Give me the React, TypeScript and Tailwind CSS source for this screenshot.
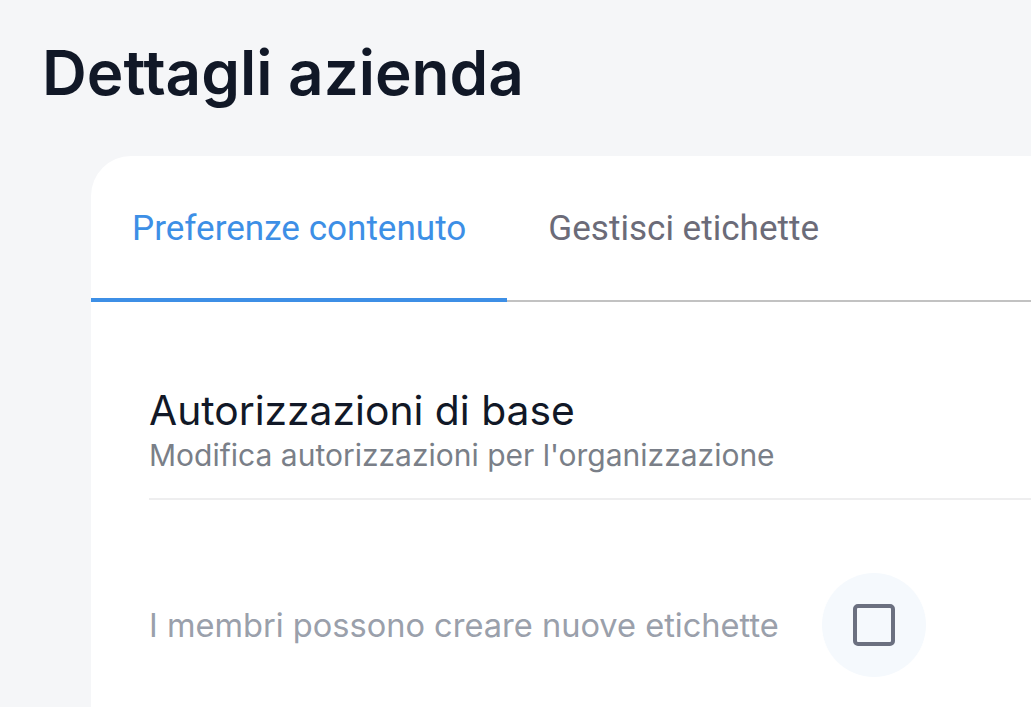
import { useState } from 'react';

const tabs = ['Preferenze contenuto', 'Gestisci etichette'];

export default function App() {
  const [active, setActive] = useState(0);
  const [checked, setChecked] = useState(false);

  return (
    <div className="min-h-screen bg-[#f5f6f8] overflow-hidden" style={{ fontFamily: 'Inter, "Noto Sans", sans-serif' }}>
      {/* Page title */}
      <h1 className="pl-[42px] pt-[36px] text-[62px] leading-[74px] font-semibold text-[#111827]">
        Dettagli azienda
      </h1>

      {/* Card */}
      <div className="ml-[91px] mt-[46px] w-[1000px] bg-white rounded-tl-[40px] pb-10">
        {/* Tabs */}
        <div className="flex border-b-2 border-[#c2c2c2]">
          {tabs.map((t, i) => (
            <button
              key={t}
              onClick={() => setActive(i)}
              className={`px-[41px] pt-[52px] pb-[50px] -mb-[2px] text-[35.1px] leading-[40px] border-b-4 ${
                active === i ? 'text-[#3d8fe6] border-[#3d8fe6]' : 'text-[#6b6b78] border-transparent'
              }`}
              style={{ fontFamily: 'Roboto, sans-serif' }}
            >
              {t}
            </button>
          ))}
        </div>

        {/* Section */}
        <div className="pl-[58px] pt-[86px]">
          <div className="pb-[23px] border-b-2 border-[#eeeeef]">
            <h2 className="text-[40.8px] leading-[44px] text-[#111827]">Autorizzazioni di base</h2>
            <p className="mt-[3px] text-[30px] leading-[40px] text-[#7a7f88]">Modifica autorizzazioni per l'organizzazione</p>
          </div>

          <div className="flex items-center gap-[43px] pt-[73px]">
            <span className="text-[32.6px] leading-[40px] text-[#9aa0ab]">I membri possono creare nuove etichette</span>
            <button
              onClick={() => setChecked(!checked)}
              className="w-[104px] h-[104px] rounded-full bg-[#f5f9fd] flex items-center justify-center"
            >
              <span className="w-[42px] h-[42px] rounded-[5px] border-4 border-[#6b7080] flex items-center justify-center">
                {checked && <span className="w-[20px] h-[20px] bg-[#6b7080] rounded-sm" />}
              </span>
            </button>
          </div>
        </div>
      </div>
    </div>
  );
}
